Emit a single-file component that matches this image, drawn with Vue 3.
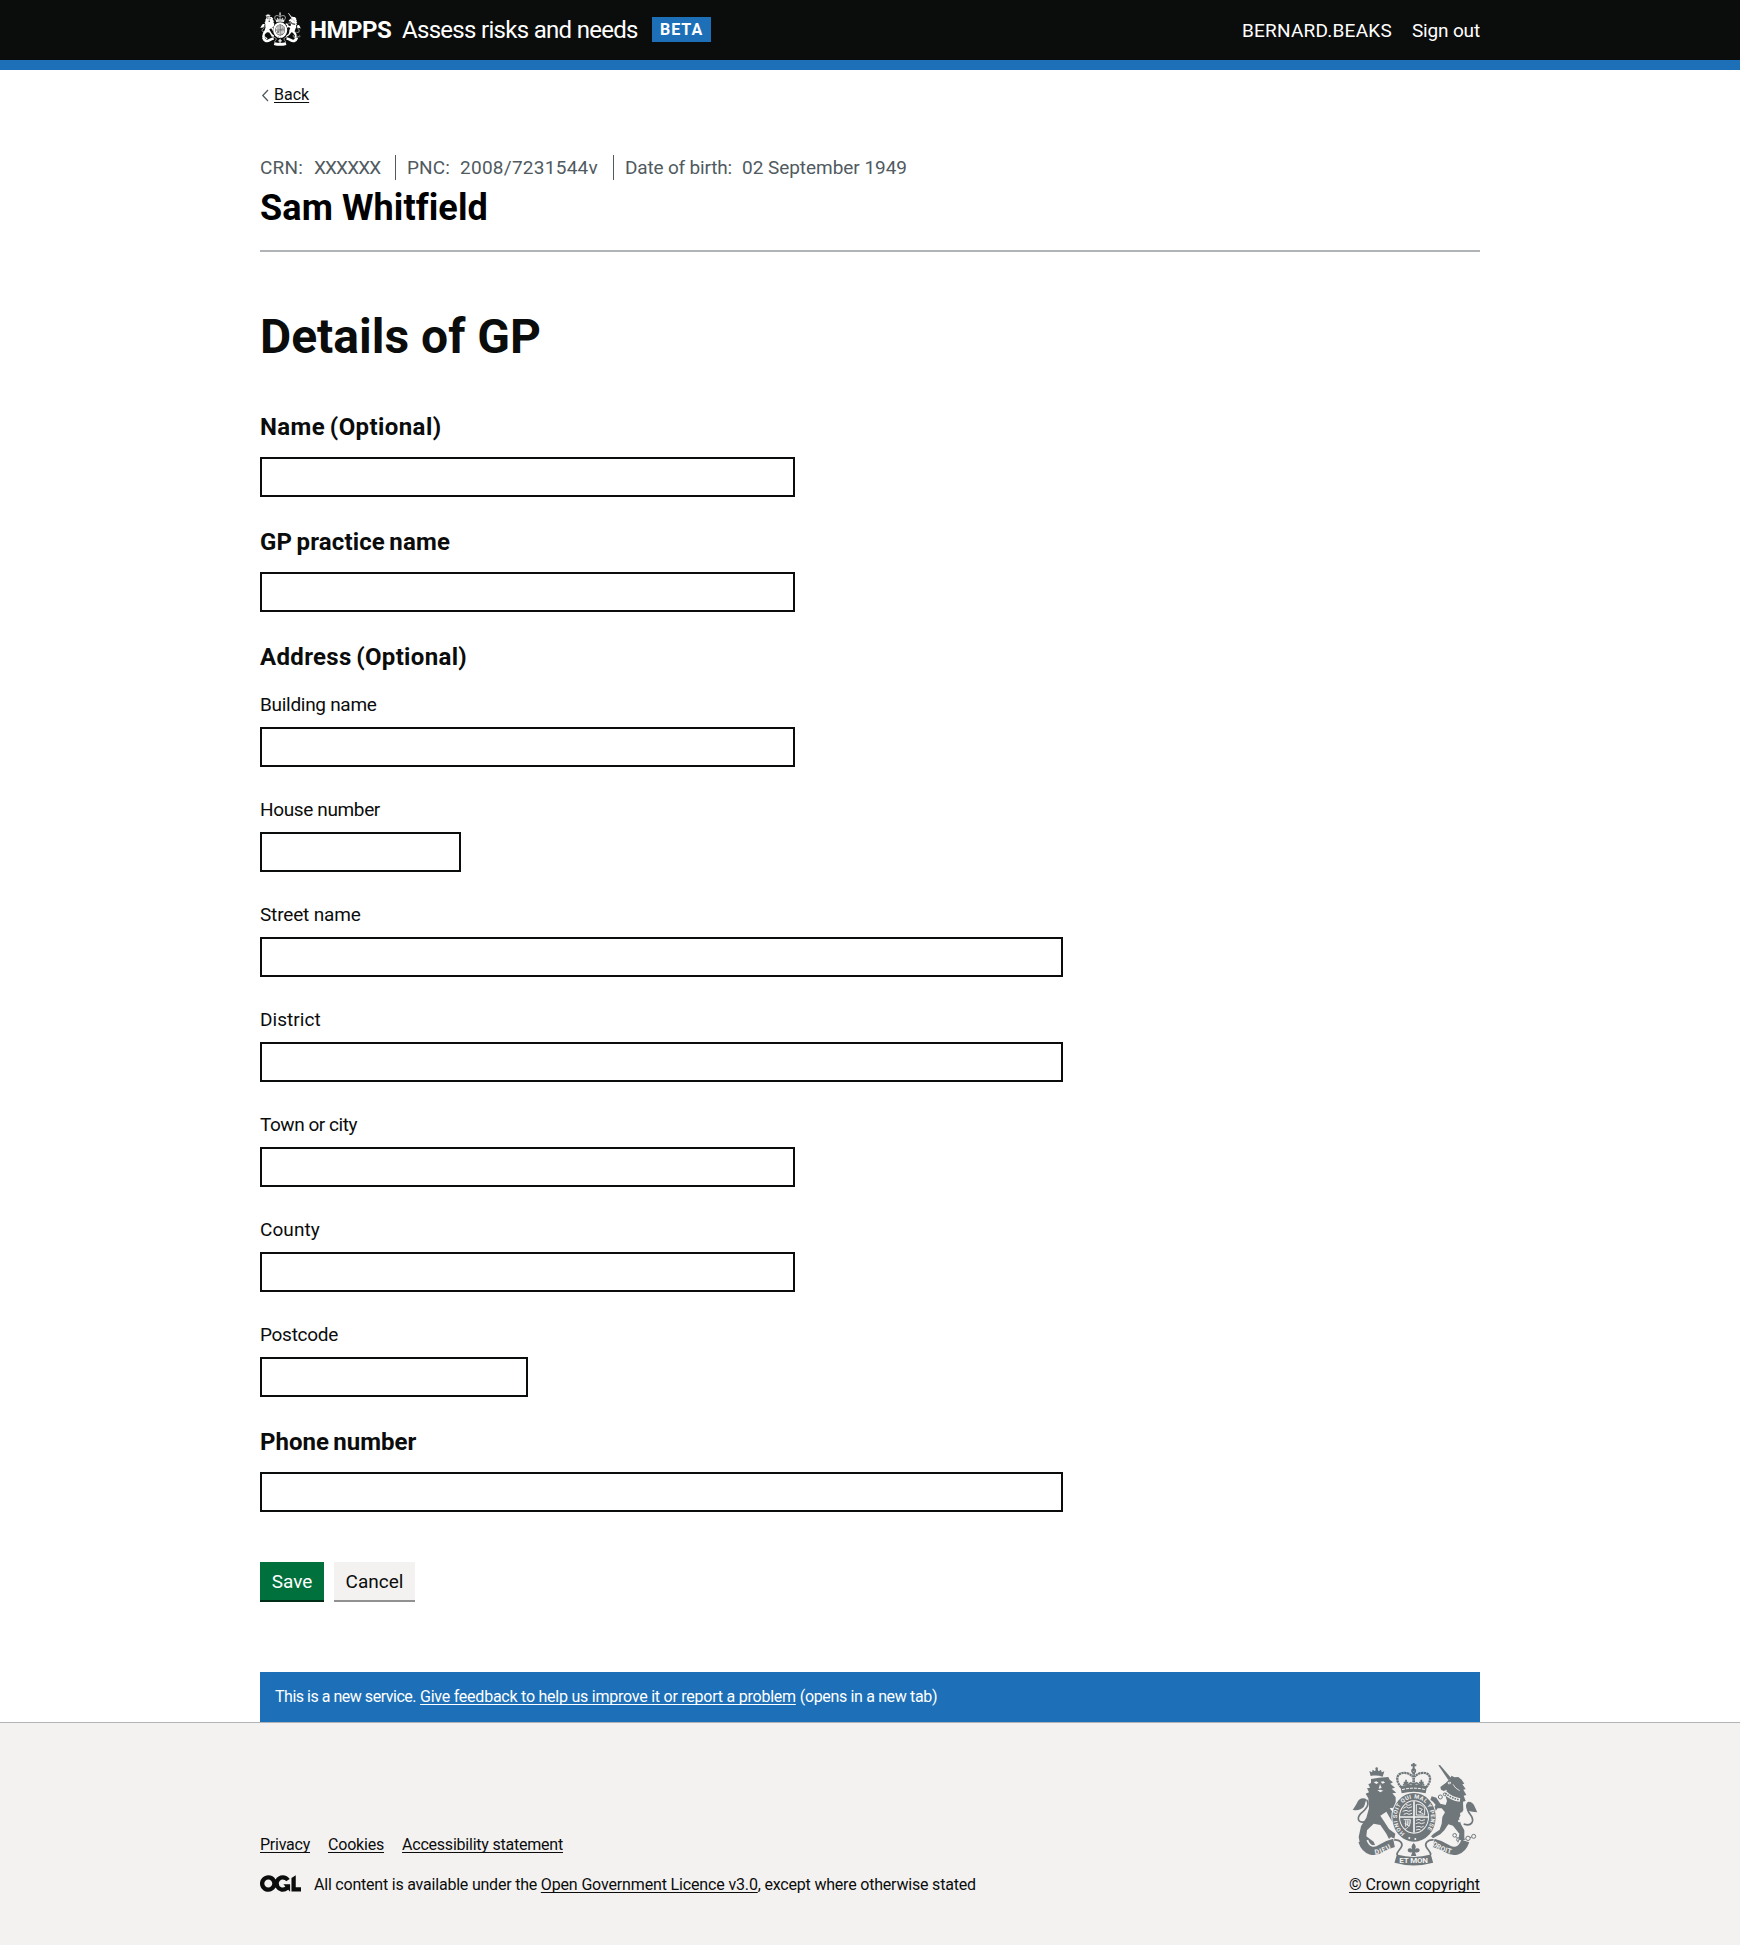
<script setup>
const offender = [
  { key: 'CRN:', value: 'XXXXXX', keyTrack: 0.2, valueTrack: -0.85, keyWidth: 54, width: 136 },
  { key: 'PNC:', value: '2008/7231544v', keyTrack: 0.1, valueTrack: 0.27, keyWidth: 53, width: 207 },
  { key: 'Date of birth:', value: '02 September 1949', keyTrack: -0.17, valueTrack: -0.04, keyWidth: 117, width: 290 },
]

const leadFields = [
  { id: 'name', label: 'Name (Optional)', track: 0.41, width: 535 },
  { id: 'practice', label: 'GP practice name', track: 0.15, width: 535 },
]

const addressFields = [
  { id: 'building', label: 'Building name', track: -0.29, width: 535 },
  { id: 'house', label: 'House number', track: -0.36, width: 201 },
  { id: 'street', label: 'Street name', track: -0.17, width: 803 },
  { id: 'district', label: 'District', track: 0.06, width: 803 },
  { id: 'town', label: 'Town or city', track: -0.46, width: 535 },
  { id: 'county', label: 'County', track: 0.08, width: 535 },
  { id: 'postcode', label: 'Postcode', track: -0.29, width: 268 },
]

const footerLinks = [
  { label: 'Privacy', track: -0.24 },
  { label: 'Cookies', track: -0.2 },
  { label: 'Accessibility statement', track: -0.22 },
]

const px = (n) => `${n}px`
</script>

<template>
  <div class="page">
    <svg class="defs" width="0" height="0" aria-hidden="true">
      <symbol id="crest" viewBox="64 66 378 312">
        <!-- lion -->
        <g fill="currentColor">
          <path d="M120 108l-4-15 8 4 2-8 7 5 5-10 6 10 7-5 2 8 8-3-5 16c-12-4-24-4-36-2z" />
          <circle cx="138" cy="86" r="4" />
          <path transform="translate(45 45)" d="M76 72L100 68 128 66 132 74 142 82 134 86 148 98 138 101 152 113 140 115 150 127 150 148 159 158 155 172 140 158 132 160 146 178 153 196 143 206 136 194 122 170 104 182 116 200 130 222 149 236 146 252 136 246 130 252 122 236 104 210 84 206 64 226 62 244 84 260 89 272 80 270 73 281 66 272 58 280 54 268 44 272 39 246 46 214 62 188 70 160 68 130 60 116 70 112 64 100 73 98 68 88 76 84Z" />
        </g>
        <path d="M108 243c-22 10-33-5-18-22 16-14 28-27 18-41" fill="none" stroke="currentColor" stroke-width="5" />
        <path d="M108 178c-11-7-25-2-29 11-4 7-8 15-13 20 12 4 26 0 33-8 5-6 3-14 9-23z" fill="currentColor" />
        <path d="M129 127l8-3 7 4-7 4zm21-2l9-1 4 4-8 3zM148 132l5 12-9 2zM140 151l9-2 9 3-9 5z" fill="var(--ground)" />

        <!-- unicorn -->
        <g fill="currentColor">
          <path d="M323 76l5-1 34 40-9 5z" />
          <path transform="translate(45 45)" d="M312 72L318 62 326 67 338 66 348 74 356 86 350 88 360 102 353 104 362 120 354 122 360 138 352 140 353 165 340 190 346 208 356 226 356 252 348 262 350 278 334 276 339 250 341 236 322 212 308 208 296 226 284 238 262 250 256 244 264 236 282 224 288 206 290 186 298 172 288 160 276 160 268 170 262 160 270 150 262 140 254 134 258 124 272 128 284 146 300 150 304 138 298 118 304 104 294 108 286 104 284 96 300 84Z" />
        </g>
        <path d="M343 158c12 12 28 20 45 22" fill="none" stroke="var(--ground)" stroke-width="11" />
        <path d="M344 159c12 11 27 18 43 20" fill="none" stroke="currentColor" stroke-width="5" stroke-dasharray="5 3" />
        <path d="M352 128l7-2 1 4-6 2zM367 133l8 11 12 8" fill="none" stroke="var(--ground)" stroke-width="2.5" />
        <path d="M399 252c24 9 32-8 23-24-12-14-16-24-9-37" fill="none" stroke="currentColor" stroke-width="5" />
        <path d="M413 185c-10 6-8 20-1 26 8 6 18 4 28 6-3-6-5-12-9-20-3-7-8-12-18-12z" fill="currentColor" />
        <g fill="none" stroke="currentColor" stroke-width="3">
          <circle cx="372" cy="286" r="5.5" /><circle cx="384" cy="299" r="6" />
          <circle cx="412" cy="295" r="6.5" /><circle cx="429" cy="289" r="6" />
          <path d="M376 290l5 5M391 300l14-3M418 293l5-2" />
          <circle cx="329" cy="171" r="6" /><circle cx="342" cy="163" r="4" />
        </g>
        <circle cx="393" cy="222" r="5" fill="var(--ground)" />
        <circle cx="386" cy="243" r="4" fill="var(--ground)" />

        <!-- crown -->
        <g fill="none" stroke="currentColor">
          <path d="M249 69v24M241 76h16" stroke-width="6" />
          <circle cx="249" cy="92" r="5" stroke-width="5" />
          <path d="M212 142c-16-16-16-37-1-42 14-4 26 0 35 10M286 142c16-16 16-37 1-42-14-4-26 0-35 10" stroke-width="7" stroke-dasharray="7 1.5" />
          <path d="M249 98v34" stroke-width="8" stroke-dasharray="6 1.5" />
          <path d="M218 136c7-9 9-9 14 0 7-10 10-10 17 0 7-10 10-10 17 0 5-9 7-9 14 0" stroke-width="5" />
          <path d="M226 119v18M272 119v18M219 128h14M265 128h14" stroke-width="5" />
        </g>
        <path d="M209 139c26-7 54-7 80 0l-4 21c-24-6-48-6-72 0z" fill="currentColor" />
        <path d="M214 149c23-6 47-6 70 0" fill="none" stroke="var(--ground)" stroke-width="3" stroke-dasharray="9 3" />

        <!-- garter and shield -->
        <ellipse cx="250" cy="232" rx="68" ry="76" fill="var(--ground)" />
        <ellipse cx="250" cy="232" rx="65" ry="73" fill="currentColor" />
        <ellipse cx="250" cy="231" rx="45" ry="50" fill="var(--ground)" />
        <ellipse cx="250" cy="231" rx="42" ry="47" fill="currentColor" />
        <path d="M250 184v94M208 231h84" stroke="var(--ground)" stroke-width="5" />
        <g fill="none" stroke="var(--ground)" stroke-width="2.8">
          <path d="M218 205l9-5 7 4 10-4M216 214l10-3 8 3 9-3M219 223l9-3 7 3 9-3M226 194l8 2 8-3" />
          <path d="M257 194c9-3 20 2 25 11v20h-25zM265 204l10 4-8 9 11 4M263 215h8" />
          <path d="M219 239h20c1 13-4 23-16 29M225 241v19M230 241v16M235 241v12M222 250l16 8" />
          <path d="M256 241l9-3 7 4 11-3M255 251l10-3 7 3 10-3M256 261l9-2 7 3 7-3M256 270l9-2 5 2" />
        </g>
        <circle cx="236" cy="294" r="3" fill="var(--ground)" />
        <circle cx="254" cy="297" r="3" fill="var(--ground)" />

        <!-- scroll -->
        <g fill="none" stroke="var(--ground)" stroke-width="33">
          <path d="M97 305C108 336 132 338 152 325S182 312 192 310M402 305C391 336 367 338 347 325S317 312 307 310" />
        </g>
        <g fill="none" stroke="currentColor">
          <path d="M95 303C106 336 132 338 152 325S180 311 190 309M404 303C393 336 367 338 347 325S319 311 309 309" stroke-width="25" />
          <path d="M190 300c18-2 28 10 22 21s-14 14-13 24M309 300c-18-2-28 10-22 21s14 14 13 24" stroke-width="5" />
          <path d="M195 356C230 366 268 366 304 356" stroke-width="26" />
        </g>
        <path d="M249 309c7 8 8 12 4 20 4-6 14-6 14 2-1 7-9 8-14 5l4 12h-16l4-12c-5 3-13 2-14-5 0-8 10-8 14-2-4-8-3-12 4-20z" fill="currentColor" />
      </symbol>
    </svg>

    <header class="header">
      <div class="container header-row">
        <div class="brand">
          <svg class="header-crest"><use href="#crest" /></svg>
          <a class="org">HMPPS</a>
          <a class="service">Assess risks and needs</a>
          <strong class="tag">BETA</strong>
        </div>
        <nav class="account">
          <span class="user">BERNARD.BEAKS</span>
          <a class="signout">Sign out</a>
        </nav>
      </div>
    </header>

    <main class="container main">
      <a class="back">
        <svg class="chevron" width="8" height="13" viewBox="0 0 8 13">
          <path d="M7 1L1.8 6.5 7 12" fill="none" stroke="#505a5f" stroke-width="1.3" />
        </svg>
        <span class="link">Back</span>
      </a>

      <section class="offender">
        <dl class="facts">
          <div v-for="f in offender" :key="f.key" class="fact" :style="{ width: px(f.width) }">
            <dt :style="{ width: px(f.keyWidth), letterSpacing: px(f.keyTrack) }">{{ f.key }}</dt>
            <dd :style="{ letterSpacing: px(f.valueTrack) }">{{ f.value }}</dd>
          </div>
        </dl>
        <h2 class="person">Sam Whitfield</h2>
      </section>

      <h1 class="title">Details of GP</h1>

      <form class="form" @submit.prevent>
        <div v-for="f in leadFields" :key="f.id" class="group">
          <label class="label-m" :for="f.id" :style="{ letterSpacing: px(f.track) }">{{ f.label }}</label>
          <input :id="f.id" class="input" type="text" :style="{ width: px(f.width) }" />
        </div>

        <fieldset class="address">
          <legend class="label-m legend">Address (Optional)</legend>
          <div v-for="f in addressFields" :key="f.id" class="group group-s">
            <label class="label-s" :for="f.id" :style="{ letterSpacing: px(f.track) }">{{ f.label }}</label>
            <input :id="f.id" class="input" type="text" :style="{ width: px(f.width) }" />
          </div>
        </fieldset>

        <div class="group">
          <label class="label-m phone" for="phone">Phone number</label>
          <input id="phone" class="input" type="text" :style="{ width: px(803) }" />
        </div>

        <div class="buttons">
          <button class="button save" type="submit">Save</button>
          <button class="button cancel" type="button">Cancel</button>
        </div>
      </form>

      <p class="feedback">
        <span class="intro">This is a new service.</span>
        <a class="link ask">Give feedback to help us improve it or report a problem</a>
        <span class="newtab">(opens in a new tab)</span>
      </p>
    </main>

    <footer class="footer">
      <div class="container footer-row">
        <div class="meta">
          <nav class="footer-links">
            <a v-for="l in footerLinks" :key="l.label" class="link" :style="{ letterSpacing: px(l.track) }">{{ l.label }}</a>
          </nav>
          <div class="licence">
            <svg class="ogl" viewBox="0 0 483.2 195.7" width="41" height="17">
              <path fill="currentColor" d="M421.5 142.8V.1l-50.7 32.3v161.1h112.4v-50.7zm-122.3-9.6A47.12 47.12 0 0 1 221 97.8c0-26 21.1-47.1 47.1-47.1 16.7 0 31.4 8.7 39.7 21.8l42.7-27.2A97.63 97.63 0 0 0 268.1 0c-36.5 0-68.3 20.1-85.1 49.7A98 98 0 0 0 97.8 0C43.9 0 0 43.9 0 97.8s43.9 97.8 97.8 97.8c36.5 0 68.3-20.1 85.1-49.7a97.76 97.76 0 0 0 149.6 25.4l19.4 22.2h3v-87.8h-80l24.3 27.5zM97.8 145c-26 0-47.1-21.1-47.1-47.1s21.1-47.1 47.1-47.1 47.1 21.1 47.1 47.1S123.8 145 97.8 145" />
            </svg>
            <p class="licence-text">
              <span class="all">All content is available under the </span><a class="link ogl-link">Open Government Licence v3.0</a><span class="except">, except where otherwise stated</span>
            </p>
          </div>
        </div>
        <div class="copyright">
          <svg class="footer-crest" viewBox="64 66 378 312">
            <use href="#crest" x="64" y="66" width="378" height="312" />
            <defs>
              <path id="garter" d="M222 280A51 57 0 1 1 279 279" />
              <path id="dieu" d="M134 344Q160 340 196 316" />
              <path id="droit" d="M303 315Q334 340 380 344" />
            </defs>
            <g class="motto">
              <text font-size="17"><textPath href="#garter" textLength="262">HONI SOIT QUI MAL Y PENSE</textPath></text>
              <text font-size="21"><textPath href="#dieu" textLength="52">DIEU</textPath></text>
              <text font-size="21"><textPath href="#droit" textLength="64">DROIT</textPath></text>
              <text x="249" y="370" font-size="24" text-anchor="middle" textLength="86">ET MON</text>
            </g>
          </svg>
          <a class="link crown">© Crown copyright</a>
        </div>
      </div>
    </footer>
  </div>
</template>

<style>
body {
  margin: 0;
  background: #fff;
}
</style>

<style scoped>
.page {
  display: flex;
  flex-direction: column;
  min-height: 1945px;
  font-family: Roboto, "Liberation Sans", sans-serif;
  font-size: 19px;
  line-height: 25px;
  color: #0b0c0c;
}
.defs {
  position: absolute;
}
.container {
  width: 1220px;
  margin: 0 auto;
}
.link {
  text-decoration: underline;
  text-decoration-thickness: 1px;
  text-underline-offset: 2px;
  text-decoration-skip-ink: none;
}

.header {
  height: 60px;
  background: #0b0c0c;
  border-bottom: 10px solid #1d70b8;
  color: #fff;
}
.header-row {
  display: flex;
  justify-content: space-between;
  height: 60px;
}
.brand {
  display: flex;
  align-items: flex-start;
}
.header-crest {
  --ground: #0b0c0c;
  width: 41px;
  height: 34px;
  margin-top: 12px;
}
.org,
.service {
  margin-top: 15px;
  font-size: 24px;
  line-height: 30px;
}
.org {
  width: 92px;
  margin-left: 9px;
  font-weight: 700;
  letter-spacing: -0.5px;
}
.service {
  width: 250px;
  letter-spacing: -0.7px;
  white-space: nowrap;
}
.tag {
  width: 59px;
  height: 25px;
  margin-top: 17px;
  background: #1d70b8;
  font-size: 16px;
  line-height: 25px;
  letter-spacing: 1px;
  text-indent: 8px;
}
.account {
  display: flex;
  gap: 20px;
  padding-top: 18px;
}
.user {
  letter-spacing: 0.24px;
}
.signout {
  letter-spacing: -0.16px;
}

.main {
  display: flex;
  flex-direction: column;
  height: 1652px;
}
.back {
  display: flex;
  align-items: center;
  gap: 5px;
  margin-top: 15px;
  padding-left: 1px;
  font-size: 16px;
  line-height: 20px;
}
.chevron {
  flex: none;
}
.offender {
  margin-top: 50px;
  padding-bottom: 22px;
  border-bottom: 2px solid #b1b4b6;
}
.facts {
  display: flex;
  gap: 11px;
  margin: 0;
  color: #505a5f;
  white-space: nowrap;
}
.fact {
  display: flex;
  box-sizing: border-box;
  height: 25px;
  border-right: 1px solid #505a5f;
}
.fact:last-child {
  border-right: 0;
}
.fact dd {
  margin: 0;
}
.person {
  margin: 8px 0 0;
  font-size: 36px;
  line-height: 40px;
  font-weight: 700;
  letter-spacing: 0.1px;
  color: #000;
}
.title {
  margin: 60px 0 50px;
  font-size: 48px;
  line-height: 50px;
  font-weight: 700;
}

.form,
.group {
  display: flex;
  flex-direction: column;
  align-items: flex-start;
}
.group {
  gap: 15px;
  margin-bottom: 30px;
}
.group-s {
  gap: 10px;
}
.label-m {
  font-size: 24px;
  line-height: 30px;
  font-weight: 700;
  word-spacing: -1.7px;
}
.input {
  box-sizing: border-box;
  height: 40px;
  padding: 5px;
  border: 2px solid #0b0c0c;
  border-radius: 0;
  background: #fff;
  font: inherit;
}
.address {
  margin: 0;
  padding: 0;
  border: 0;
}
.legend {
  margin-bottom: 20px;
  padding: 0;
  letter-spacing: 0.33px;
}
.phone {
  letter-spacing: 0.03px;
}
.buttons {
  display: flex;
  gap: 10px;
  margin-top: 20px;
}
.button {
  height: 38px;
  padding: 7px 0 6px;
  border: 0;
  font: inherit;
  text-align: center;
}
.save {
  width: 64px;
  background: #00703c;
  box-shadow: 0 2px 0 #002d18;
  color: #fff;
}
.cancel {
  width: 81px;
  background: #f3f2f1;
  box-shadow: 0 2px 0 #929191;
  color: #0b0c0c;
}
.feedback {
  display: flex;
  gap: 4px;
  height: 20px;
  margin: auto 0 0;
  padding: 15px;
  background: #1d70b8;
  color: #fff;
  font-size: 16px;
  line-height: 20px;
}
.intro {
  letter-spacing: -0.48px;
}
.ask {
  letter-spacing: -0.24px;
}
.newtab {
  letter-spacing: -0.35px;
}

.footer {
  flex: 1;
  background: #f3f2f1;
  border-top: 1px solid #b1b4b6;
  font-size: 16px;
  line-height: 20px;
}
.footer-row {
  display: flex;
  justify-content: space-between;
  padding-top: 40px;
}
.meta {
  padding-top: 72px;
}
.footer-links {
  display: flex;
  gap: 18px;
}
.licence {
  display: flex;
  align-items: flex-start;
  gap: 13px;
  margin-top: 20px;
}
.licence-text {
  margin: 0;
  white-space: pre;
}
.all {
  letter-spacing: -0.21px;
}
.ogl-link {
  letter-spacing: -0.15px;
}
.except {
  letter-spacing: -0.2px;
}
.copyright {
  display: flex;
  flex-direction: column;
  align-items: flex-end;
}
.footer-crest {
  --ground: #f3f2f1;
  width: 126px;
  height: 104px;
  margin: -1px 2px 9px 0;
  color: #6f777b;
}
.motto {
  fill: #f3f2f1;
  font-weight: 700;
}
.crown {
  letter-spacing: -0.09px;
}
</style>
